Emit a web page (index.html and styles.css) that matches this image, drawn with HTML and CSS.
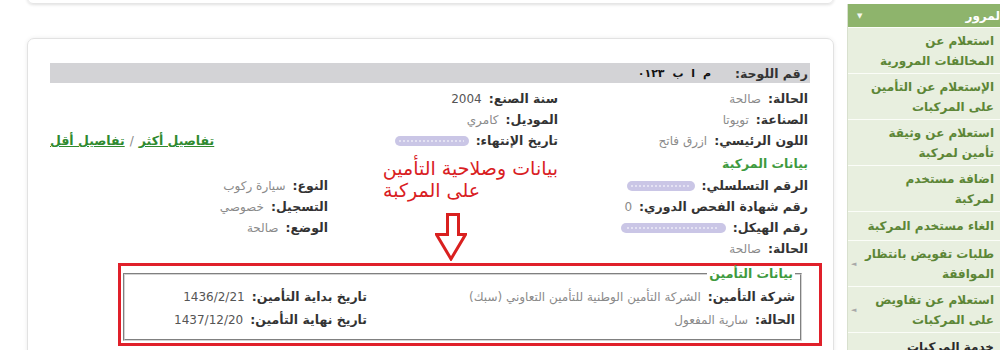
FILE: index.html
```html
<!DOCTYPE html>
<html lang="ar" dir="rtl">
<head>
<meta charset="utf-8">
<title>بيانات المركبة</title>
<link rel="stylesheet" href="styles.css">
</head>
<body>
<div class="page">
  <aside class="side">
    <div class="side-head"><span>المرور</span><span class="caret">▼</span></div>
    <ul class="menu">
      <li>استعلام عن<br>المخالفات المرورية</li>
      <li>الإستعلام عن التأمين<br>على المركبات</li>
      <li>استعلام عن وثيقة<br>تأمين لمركبة</li>
      <li>اضافة مستخدم<br>لمركبة</li>
      <li class="one">الغاء مستخدم المركبة</li>
      <li class="sub">طلبات تفويض بانتظار<br>الموافقة</li>
      <li class="sub">استعلام عن تفاويض<br>على المركبات</li>
      <li class="sect">خدمة المركبات</li>
    </ul>
  </aside>

  <main class="main">
    <div class="top-card"></div>
    <section class="card">
      <div class="plate-bar">
        <b>رقم اللوحة:</b><span class="plate">م ا ب ٠١٢٣</span>
      </div>

      <div class="info">
        <!-- column 1 -->
        <div class="f"><b>الحالة:</b><span>صالحة</span></div>
        <div class="f"><b>الصناعة:</b><span>تويوتا</span></div>
        <div class="f"><b>اللون الرئيسي:</b><span>ازرق فاتح</span></div>
        <div class="f head">بيانات المركبة</div>
        <div class="f"><b>الرقم التسلسلي:</b><span class="blur w68"></span></div>
        <div class="f"><b>رقم شهادة الفحص الدوري:</b><span>0</span></div>
        <div class="f"><b>رقم الهيكل:</b><span class="blur w105"></span></div>
        <div class="f"><b>الحالة:</b><span>صالحة</span></div>

        <!-- column 2 -->
        <div class="f"><b>سنة الصنع:</b><span class="dark">2004</span></div>
        <div class="f"><b>الموديل:</b><span>كامري</span></div>
        <div class="f"><b>تاريخ الإنتهاء:</b><span class="blur w74"></span></div>
        <div class="note">
          <div class="note-text">بيانات وصلاحية التأمين<br>على المركبة</div>
          <svg class="arrow" width="32" height="48" viewBox="0 0 32 48" aria-hidden="true">
            <path d="M12.5 1.5 H23.5 V21.5 H30.5 L16 46 L1.5 21.5 H12.5 Z" fill="#fff" stroke="#d9201f" stroke-width="3" stroke-linejoin="miter"/>
          </svg>
        </div>

        <!-- column 3 -->
        <div></div>
        <div></div>
        <div class="f links"><a href="#">تفاصيل أكثر</a><span class="sep">/</span><a href="#">تفاصيل أقل</a></div>
        <div></div>
        <div class="f"><b>النوع:</b><span>سيارة ركوب</span></div>
        <div class="f"><b>التسجيل:</b><span>خصوصي</span></div>
        <div class="f"><b>الوضع:</b><span>صالحة</span></div>
        <div></div>
      </div>

      <div class="hl">
        <fieldset class="ins">
          <legend>بيانات التأمين</legend>
          <div class="ins-grid">
            <div class="f"><b>شركة التأمين:</b><span>الشركة التأمين الوطنية للتأمين التعاوني (سبك)</span></div>
            <div class="f"><b>تاريخ بداية التأمين:</b><span class="dark">1436/2/21</span></div>
            <div class="f"><b>الحالة:</b><span>سارية المفعول</span></div>
            <div class="f"><b>تاريخ نهاية التأمين:</b><span class="dark">1437/12/20</span></div>
          </div>
        </fieldset>
      </div>
    </section>
  </main>
</div>
</body>
</html>
```

FILE: styles.css
```css
* { box-sizing: border-box; }
html, body { margin: 0; padding: 0; }
body {
  width: 1000px;
  height: 350px;
  overflow: hidden;
  background: #fff;
  font-family: "DejaVu Sans", sans-serif;
  font-size: 12px;
  color: #333;
}

.page {
  display: flex;
  direction: rtl;
  width: 1008px;
  height: 350px;
  margin-right: -8px;
  align-items: flex-start;
  gap: 13px;
}

/* sidebar */
.side {
  width: 161px;
  flex: none;
  margin-top: 4px;
  border-left: 1px solid #d8e0ce;
}
.side-head {
  height: 23px;
  background: #8eb46c;
  color: #fff;
  display: flex;
  justify-content: space-between;
  align-items: center;
  padding: 0 4px 0 9px;
  font-weight: bold;
}
.caret { font-size: 7px; color: #f4f8ef; }
.menu { list-style: none; margin: 0; padding: 0; }
.menu li {
  position: relative;
  background: #e8efdf;
  border-top: 1px solid #fbfdf8;
  padding: 3px 14px 2px 8px;
  line-height: 20px;
  color: #5c8636;
  font-weight: bold;
  font-size: 12px;
  white-space: nowrap;
}
.menu li.one { padding: 4px 14px 4px 8px; }
.menu li.sub::after {
  content: "◄";
  position: absolute;
  left: 3px;
  top: 50%;
  transform: translateY(-50%);
  font-size: 7px;
  color: #a9a9a9;
}
.menu li.sect { color: #2a2a2a; padding-top: 4px; }

/* main */
.main { width: 807px; flex: none; }
.top-card {
  height: 20px;
  margin-top: -16px;
  border: 1px solid #e6e6e6;
  border-radius: 6px;
  box-shadow: 0 1px 3px rgba(0,0,0,.12);
}
.card {
  margin-top: 34px;
  height: 340px;
  border: 1px solid #e2e2e2;
  border-radius: 7px;
  box-shadow: 0 0 4px rgba(0,0,0,.08);
  padding: 24px 23px 20px 22px;
}

.plate-bar {
  height: 20px;
  background: #d3d3d6;
  display: flex;
  align-items: center;
  gap: 24px;
  padding-right: 2px;
}
.plate-bar b { font-size: 12.5px; color: #333; }
.plate { color: #111; font-weight: bold; font-size: 11px; word-spacing: 4px; }

.info {
  display: grid;
  grid-template-columns: 252px 230px 1fr;
  grid-template-rows: repeat(3, 21px) 24px repeat(4, 21px);
  grid-auto-flow: column;
  margin-top: 5px;
}
.f {
  display: flex;
  align-items: center;
  gap: 7px;
  white-space: nowrap;
}
.info > .f:nth-child(-n+8) { padding-right: 2px; }
.f b { color: #333; font-size: 12.5px; }
.f span { color: #8a8a8a; }
.f span.dark { color: #555; }
.head { color: #3e9a3e; font-weight: bold; font-size: 12.5px; }

.blur {
  display: inline-block;
  height: 10px;
  border-radius: 5px;
  background:
    repeating-linear-gradient(90deg, #e4e2f3 0 2px, transparent 2px 4px) center / 88% 2px no-repeat,
    #cac6e6;
}
.w68 { width: 68px; }
.w74 { width: 74px; }
.w105 { width: 105px; }

.note { grid-row: span 5; }
.note-text {
  width: 175px;
  margin-top: 6px;
  text-align: left;
  color: #d9201f;
  font-size: 19px;
  line-height: 22px;
  white-space: nowrap;
}
.arrow { display: block; margin: 12px 91px 0 0; }

.links { justify-self: end; gap: 5px; }
.links a { color: #2f8a2f; font-weight: bold; text-decoration: underline; font-size: 12.5px; }
.links .sep { color: #888; }

/* insurance block */
.hl {
  margin: 4px -12px 0 68px;
  height: 83px;
  border: 3px solid #e0202a;
}
.ins {
  margin: 0 17px 0 2px;
  height: 75px;
  border: 2px groove #d4d4d4;
  padding: 4px 5px 0;
}
.ins legend {
  padding: 0 2px;
  color: #3e9a3e;
  font-weight: bold;
  font-size: 12.5px;
}
.ins-grid {
  display: grid;
  grid-template-columns: 428px 1fr;
  grid-auto-rows: 23px;
}
```
